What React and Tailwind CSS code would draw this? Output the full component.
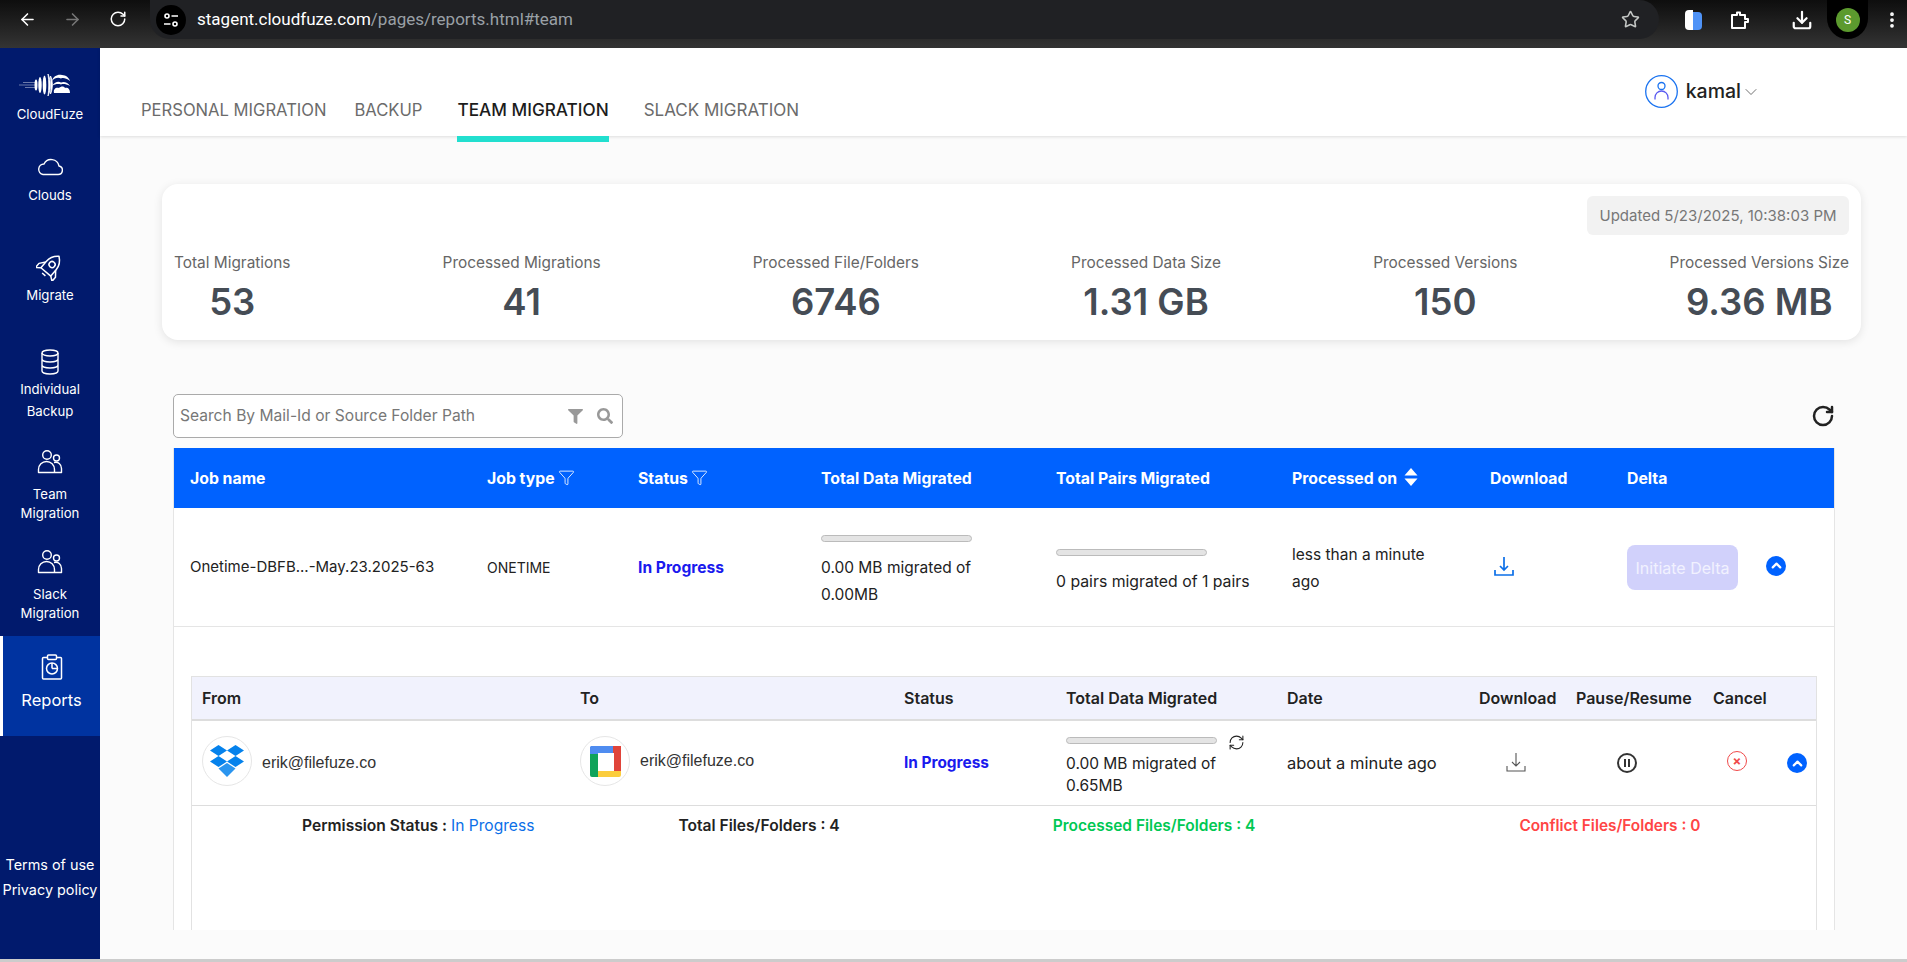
import { ArrowLeft, ArrowRight, RotateCw, Star, Download, EllipsisVertical, Funnel, ChevronUp, ChevronDown, RefreshCw } from 'lucide-react';
import { FaFilter, FaSearch } from 'react-icons/fa';

const tableCols = 'grid grid-cols-[297px_151px_183px_235px_236px_198px_137px_1fr] pl-4';
const subCols = 'grid grid-cols-[379px_323px_163px_221px_192px_97px_137px_1fr] pl-[9px]';

const stats = [
    ['Total Migrations', '53'],
    ['Processed Migrations', '41'],
    ['Processed File/Folders', '6746'],
    ['Processed Data Size', '1.31 GB'],
    ['Processed Versions', '150'],
    ['Processed Versions Size', '9.36 MB'],
];

const Logo = () => (
    <svg className="mr-[10px]" width="52" height="24" viewBox="0 0 52 24" fill="white" stroke="none">
        <path d="M0 12h16M4 9.500h12M6 14.500h10" stroke="white" strokeWidth="0.7" opacity="0.6" />
        <ellipse cx="17" cy="12" rx="1.500" ry="5.500" />
        <ellipse cx="21" cy="12" rx="1.700" ry="8" />
        <ellipse cx="25.500" cy="12" rx="1.800" ry="9.500" />
        <path d="M29 1c3 6 3 16 0 22 1-7 1-15 0-22zM31.500 3c2.500 5 2.500 13 0 18 .7-6 .7-12 0-18z" stroke="white" strokeWidth="0.8" />
        <path d="M33 8c1-5 6-7 10-6 4 .3 7 2.500 8 6-4-3-7-3.500-9-2.500C39 4 35.500 5 33 8z" />
        <path d="M33 13c3-4 6-5 9-3.500 3-1.500 7 .2 9 3.500-4-2-7-2.500-9-1.500-3-1-6-.5-9 1.500z" />
        <path d="M35 20c-1-4 2-6 5-5 2-2 5-2 6 0 3-1 5 1 5 5z" />
    </svg>
);

const CloudIcon = () => (
    <svg className="-translate-y-[1px]" width="26" height="26" viewBox="0 0 26 26" fill="none" stroke="white" strokeWidth="1.4">
        <path d="M6 21.500h15a4.300 4.300 0 0 0 1-8.500A8 8 0 0 0 7 11a5.300 5.300 0 0 0-1 10.500z" />
    </svg>
);

const RocketIcon = () => (
    <svg width="28" height="28" viewBox="0 0 26 26" fill="none" stroke="white" strokeWidth="1.4" strokeLinejoin="round">
        <g transform="rotate(40 13 13)">
            <path d="M13 0c4 3 6 7 6 11v8H7v-8c0-4 2-8 6-11z" />
            <circle cx="13" cy="10" r="2.800" />
            <path d="M7 12l-4 5v5l4-3M19 12l4 5v5l-4-3M11 22h4" />
        </g>
    </svg>
);

const DatabaseIcon = () => (
    <svg width="20" height="26" viewBox="0 0 20 26" fill="none" stroke="white" strokeWidth="1.4">
        <ellipse cx="10" cy="4" rx="8" ry="3" />
        <path d="M2 4v18c0 1.700 3.600 3 8 3s8-1.300 8-3V4M2 10c0 1.700 3.600 3 8 3s8-1.300 8-3M2 16c0 1.700 3.600 3 8 3s8-1.300 8-3" />
    </svg>
);

const UsersIcon = () => (
    <svg width="26" height="26" viewBox="0 0 26 26" fill="none" stroke="white" strokeWidth="1.4" strokeLinejoin="round">
        <circle cx="10" cy="6" r="4.300" />
        <circle cx="19.500" cy="9" r="3" />
        <path d="M1.500 23.500v-3a8 8 0 0 1 16 0v3zM17 13.500c4-1 7.500 1.500 7.500 6v4h-7" />
    </svg>
);

const ReportIcon = () => (
    <svg width="22" height="26" viewBox="0 0 22 26" fill="none" stroke="white" strokeWidth="1.5">
        <rect x="1.500" y="3.500" width="19" height="21.500" rx="1" />
        <rect x="6.500" y="1" width="9" height="4.500" rx="1" fill="#0033a0" />
        <circle cx="11" cy="14.500" r="5.500" />
        <path d="M11 14.500V9M11 14.500h5.500" />
    </svg>
);

const SideItem = ({ icon, lines, height, gap, leading }) => (
    <div className={`flex flex-col items-center pt-[11px] ${height}`}>
        <div className="flex h-[26px] items-center justify-center">{icon}</div>
        <div className={`text-center text-[13.2px] text-white ${gap} ${leading}`}>
            {lines.map((l) => <div key={l}>{l}</div>)}
        </div>
    </div>
);

const Sidebar = () => (
    <aside className="flex w-[100px] shrink-0 flex-col bg-[#011a6d]">
        <div className="flex h-[95px] flex-col items-center pt-[25px]">
            <Logo />
            <div className="mt-[9px] text-[13.2px] leading-4 text-white">CloudFuze</div>
        </div>
        <SideItem icon={<CloudIcon />} lines={['Clouds']} height="h-[100px]" gap="mt-[7px]" leading="leading-4" />
        <SideItem icon={<RocketIcon />} lines={['Migrate']} height="h-[95px]" gap="mt-[7px]" leading="leading-4" />
        <SideItem icon={<DatabaseIcon />} lines={['Individual', 'Backup']} height="h-[100px]" gap="mt-[3px]" leading="leading-[22px]" />
        <SideItem icon={<UsersIcon />} lines={['Team', 'Migration']} height="h-[100px]" gap="mt-[10px]" leading="leading-[19px]" />
        <SideItem icon={<UsersIcon />} lines={['Slack', 'Migration']} height="h-[98px]" gap="mt-[10px]" leading="leading-[19px]" />
        <div className="flex h-[100px] flex-col items-center border-l-[3px] border-white bg-[#0033a0] pt-[18px]">
            <ReportIcon />
            <div className="mt-[8px] text-[16.5px] leading-6 text-white">Reports</div>
        </div>
        <div className="mt-auto pb-[57px] text-center text-[14.4px] leading-[25px] text-white">
            <div>Terms of use</div>
            <div>Privacy policy</div>
        </div>
    </aside>
);

const BrowserBar = () => (
    <div className="flex h-12 shrink-0 items-start bg-gradient-to-b from-[#0e0e0e] to-[#343434] font-['Roboto',sans-serif]">
        <div className="flex h-[38px] w-[150px] items-center pl-[18px] text-white">
            <ArrowLeft size={19} strokeWidth={2} />
            <ArrowRight size={19} strokeWidth={2} className="ml-[26px] text-[#777]" />
            <RotateCw size={18} strokeWidth={2} className="ml-[27px]" />
        </div>
        <div className="flex h-[39px] w-[1509px] items-center rounded-b-[20px] rounded-r-[20px] bg-[#202124] pl-[6px]">
            <div className="flex h-[30px] w-[30px] items-center justify-center rounded-full bg-black">
                <svg width="16" height="16" viewBox="0 0 16 16" fill="none" stroke="white" strokeWidth="1.6">
                    <circle cx="4" cy="4" r="2" />
                    <path d="M8.500 4H15M1 12h6.500" />
                    <circle cx="12" cy="12" r="2" />
                </svg>
            </div>
            <span className="ml-[11px] text-[17px] text-white">stagent.cloudfuze.com</span>
            <span className="text-[17px] text-[#9aa0a6]">/pages/reports.html#team</span>
            <Star size={19} className="ml-auto mr-[19px] text-[#c4c7c5]" />
        </div>
        <div className="flex h-[39px] flex-1 items-center text-white">
            <div className="ml-[26px] flex">
                <div className="h-[20px] w-[8px] rounded-l-sm bg-white" />
                <div className="mt-[2px] h-[18px] w-[9px] rounded-r-sm bg-[#4f93f7]" />
            </div>
            <svg className="ml-[28px]" width="20" height="20" viewBox="0 0 20 20" fill="none" stroke="white" strokeWidth="2">
                <path d="M2 5h5V2.500h3V5h5v4h3v3h-3v6H2z" strokeLinejoin="round" />
            </svg>
            <Download size={22} strokeWidth={2.4} className="ml-[41px]" />
            <div className="ml-[14px] flex h-[39px] w-[41px] items-center justify-center rounded-b-full bg-black">
                <div className="flex h-6 w-6 items-center justify-center rounded-full bg-[#5c9a2e] text-[12px] text-white">S</div>
            </div>
            <EllipsisVertical size={20} strokeWidth={2.5} className="ml-[14px]" />
        </div>
    </div>
);

const Header = () => (
    <header className="relative z-10 flex h-[88px] shrink-0 items-end justify-between bg-white pb-[15px] pl-[41px] shadow-[0_1px_3px_rgba(0,0,0,0.12)]">
        <nav className="flex text-[16.6px] leading-[22px] text-[#6b6b6b]">
            <span>PERSONAL MIGRATION</span>
            <span className="ml-[28px]">BACKUP</span>
            <span className="relative ml-[35px] text-[17.2px] font-medium text-[#1c1c1c]">
                TEAM MIGRATION
                <span className="absolute inset-x-0 top-[37px] h-[6px] bg-[#22dfcf]" />
            </span>
            <span className="ml-[35px] text-[17px]">SLACK MIGRATION</span>
        </nav>
        <div className="mb-[13px] mr-[146px] flex items-center">
            <svg width="33" height="33" viewBox="0 0 33 33" fill="none" strokeWidth="1.3">
                <circle cx="16.500" cy="16.500" r="15.800" stroke="#1a73f0" />
                <circle cx="16.500" cy="11" r="3.500" stroke="#1a73f0" />
                <path d="M10 24.500v-2a6.500 6.500 0 0 1 13 0v2" stroke="#5a5af0" />
            </svg>
            <span className="ml-[8px] text-[19.5px] font-medium text-[#222]">kamal</span>
            <ChevronDown size={20} strokeWidth={1} className="text-[#555]" />
        </div>
    </header>
);

const StatsCard = () => (
    <div className="mt-12 rounded-2xl bg-white pb-[15px] pl-[12px] pr-3 pt-3 shadow-[0_2px_10px_rgba(0,0,0,0.1)]">
        <div className="flex justify-end">
            <div className="flex h-[39px] w-[262px] items-center justify-center rounded-md bg-[#f2f2f2] pt-[1px] text-[15px] text-[#777]">
                Updated 5/23/2025, 10:38:03 PM
            </div>
        </div>
        <div className="mt-[18px] flex justify-between">
            {stats.map(([label, value]) => (
                <div key={label} className="flex flex-col items-center">
                    <div className="text-[15.4px] leading-5 text-[#666]">{label}</div>
                    <div className="mt-[6px] text-[36.5px] font-semibold leading-[46px] text-[#454c55]">{value}</div>
                </div>
            ))}
        </div>
    </div>
);

const Bar = () => <div className="h-[7px] w-[151px] rounded-full border border-[#bbb] bg-[#e4e4e4]" />;

const UpCircle = () => (
    <div className="flex h-5 w-5 items-center justify-center rounded-full bg-[#0062ff]">
        <ChevronUp size={15} strokeWidth={3.5} color="white" />
    </div>
);

const DownloadGlyph = ({ color, width }) => (
    <svg width="20" height="20" viewBox="0 0 20 20" fill="none" stroke={color} strokeWidth={width}>
        <path d="M10 1v13M6 10l4 4 4-4M1 14v5h18v-5" />
    </svg>
);

const FilterHead = ({ children }) => (
    <div className="flex items-center">
        {children}
        <Funnel size={17} strokeWidth={1.2} className="ml-[3px] -translate-y-[1px]" />
    </div>
);

const JobTable = () => (
    <>
        <div className={`${tableCols} h-[60px] items-center bg-[#0062ff] pt-[1px] text-[15.8px] font-bold text-white`}>
            <div>Job name</div>
            <FilterHead>Job type</FilterHead>
            <FilterHead>Status</FilterHead>
            <div>Total Data Migrated</div>
            <div>Total Pairs Migrated</div>
            <div className="flex items-center">
                Processed on
                <svg className="ml-[7px] -translate-y-[2px]" width="14" height="18" viewBox="0 0 14 18" fill="white">
                    <path d="M7 0l6.500 7.500H.5zM.5 10.500h13L7 18z" />
                </svg>
            </div>
            <div>Download</div>
            <div>Delta</div>
        </div>
        <div className={`${tableCols} h-[119px] items-center border-b border-[#e5e5e5] pt-[1px] text-[15px] text-[#222]`}>
            <div>Onetime-DBFB...-May.23.2025-63</div>
            <div className="text-[14px]">ONETIME</div>
            <div className="text-[15.6px] font-bold text-[#1a1aee]">In Progress</div>
            <div className="self-start pt-[26px] text-[15.5px] leading-[27px]">
                <Bar />
                <div className="mt-[12px] w-[175px]">0.00 MB migrated of 0.00MB</div>
            </div>
            <div className="self-start pt-[40px] text-[15.8px] leading-[27px]">
                <Bar />
                <div className="mt-[12px]">0 pairs migrated of 1 pairs</div>
            </div>
            <div className="w-[150px] text-[15.5px] leading-[27px]">less than a minute ago</div>
            <div className="-translate-y-[2px] pl-[4px]"><DownloadGlyph color="#0b6fe8" width="1.7" /></div>
            <div className="flex items-center">
                <div className="flex h-[45px] w-[111px] items-center justify-center rounded-lg bg-[#d1d1fb] text-[16px] text-[#f1f1ff]">Initiate Delta</div>
                <div className="ml-[28px] -translate-y-[2px]"><UpCircle /></div>
            </div>
        </div>
    </>
);

const DropboxIcon = () => (
    <svg width="36" height="34" viewBox="0 0 36 34" fill="#0582ec">
        <path d="M9.500 1L18 6.500 9.500 12 1 6.500zM26.500 1L35 6.500 26.500 12 18 6.500zM9.500 12L18 17.500 9.500 23 1 17.500zM26.500 12L35 17.500 26.500 23 18 17.500z" />
        <path d="M18 19l8.500 5.500L18 33l-8.500-8.500z" opacity="0.85" />
    </svg>
);

const GoogleIcon = () => (
    <svg width="33" height="33" viewBox="0 0 33 33">
        <path d="M2 1h22v7H9v1H1V2z" fill="#4f8cf0" />
        <path d="M24 1h8v25h-7V8h-1z" fill="#e0443a" />
        <path d="M9 26h23v4a2 2 0 0 1-2 2H9z" fill="#fbcd3d" />
        <path d="M1 9h8v23H3a2 2 0 0 1-2-2z" fill="#10a35b" />
    </svg>
);

const Account = ({ icon, lift }) => (
    <div className="flex items-center">
        <div className={`flex h-[50px] w-[50px] items-center justify-center rounded-full border border-[#e6e6e6] ${lift}`}>{icon}</div>
        <span className="ml-[10px] font-['Liberation_Sans',sans-serif] text-[16px] text-[#333]">erik@filefuze.co</span>
    </div>
);

const SubTable = () => (
    <div className="mx-[17px] mt-[49px] flex flex-1 flex-col border-x border-t border-[#e2e2e2]">
        <div className={`${subCols} h-[44px] shrink-0 items-center border-b-2 border-[#ddd] bg-[#f1f2fd] text-[16px] font-semibold text-[#222]`}>
            <div className="pl-[1px]">From</div>
            <div>To</div>
            <div className="pl-[1px]">Status</div>
            <div>Total Data Migrated</div>
            <div>Date</div>
            <div>Download</div>
            <div>Pause/Resume</div>
            <div>Cancel</div>
        </div>
        <div className={`${subCols} h-[85px] shrink-0 items-center border-b border-[#ddd] text-[15.5px] text-[#222]`}>
            <div className="pl-[1px]"><Account icon={<DropboxIcon />} lift="-translate-y-[2px]" /></div>
            <div className="-translate-y-[2px]"><Account icon={<GoogleIcon />} /></div>
            <div className="pl-[1px] text-[15.4px] font-bold text-[#1a1aee]">In Progress</div>
            <div className="self-start pt-[16px] leading-[22px]">
                <div className="flex h-[7px] items-center">
                    <Bar />
                    <RefreshCw size={17} strokeWidth={1.5} className="ml-[11px] translate-y-[2px]" />
                </div>
                <div className="mt-[9px] w-[160px]">0.00 MB migrated of 0.65MB</div>
            </div>
            <div className="text-[16.500px]">about a minute ago</div>
            <div className="pl-[27px] -translate-y-[1px]"><DownloadGlyph color="#555" width="1.1" /></div>
            <div className="flex pl-[41px]">
                <div className="flex h-5 w-5 items-center justify-center gap-[2px] rounded-full border-2 border-[#333]">
                    <span className="h-2 w-[2px] bg-[#333]" />
                    <span className="h-2 w-[2px] bg-[#333]" />
                </div>
            </div>
            <div className="flex items-center">
                <div className="ml-[14px] flex h-5 w-5 -translate-y-[2px] items-center justify-center rounded-full border border-[#f04a4a] text-[13px] font-bold leading-none text-[#f04a4a]">×</div>
                <div className="ml-[40px]"><UpCircle /></div>
            </div>
        </div>
        <div className="flex h-10 items-center text-[15.6px] font-semibold text-[#222]">
            <div className="ml-[110px]">Permission Status : <span className="font-normal text-[#0b6fe8]">In Progress</span></div>
            <div className="ml-[144px]">Total Files/Folders : 4</div>
            <div className="ml-[213px] text-[15.5px] text-[#00c853]">Processed Files/Folders : 4</div>
            <div className="ml-[264px] text-[15.4px] text-[#ff4545]">Conflict Files/Folders : 0</div>
        </div>
    </div>
);

export default function App() {
    return (
        <div className="flex h-[962px] flex-col overflow-hidden bg-[#fbfbfb] font-['Inter',sans-serif]">
            <BrowserBar />
            <div className="flex h-[911px] shrink-0">
                <Sidebar />
                <main className="flex min-w-0 flex-1 flex-col">
                    <Header />
                    <div className="flex h-[794px] flex-col overflow-hidden pl-[62px] pr-[46px]">
                        <StatsCard />
                        <div className="flex min-h-0 flex-1 flex-col pl-[11px] pr-[26px]">
                            <div className="mb-[10px] mt-[54px] flex items-center justify-between">
                                <div className="flex h-[44px] w-[450px] items-center rounded-[5px] border border-[#aaa] bg-white pl-[6px] pr-[9px]">
                                    <span className="text-[15.6px] text-[#777]">Search By Mail-Id or Source Folder Path</span>
                                    <FaFilter size={15} className="ml-auto text-[#999]" />
                                    <FaSearch size={16} className="ml-[14px] text-[#999]" />
                                </div>
                                <RotateCw size={24} strokeWidth={2.5} className="text-[#222]" />
                            </div>
                            <div className="flex min-h-0 flex-1 flex-col border-x border-[#e5e5e5] bg-white">
                                <JobTable />
                                <SubTable />
                            </div>
                        </div>
                    </div>
                </main>
            </div>
            <div className="h-[3px] bg-[#ccc]" />
        </div>
    );
}
